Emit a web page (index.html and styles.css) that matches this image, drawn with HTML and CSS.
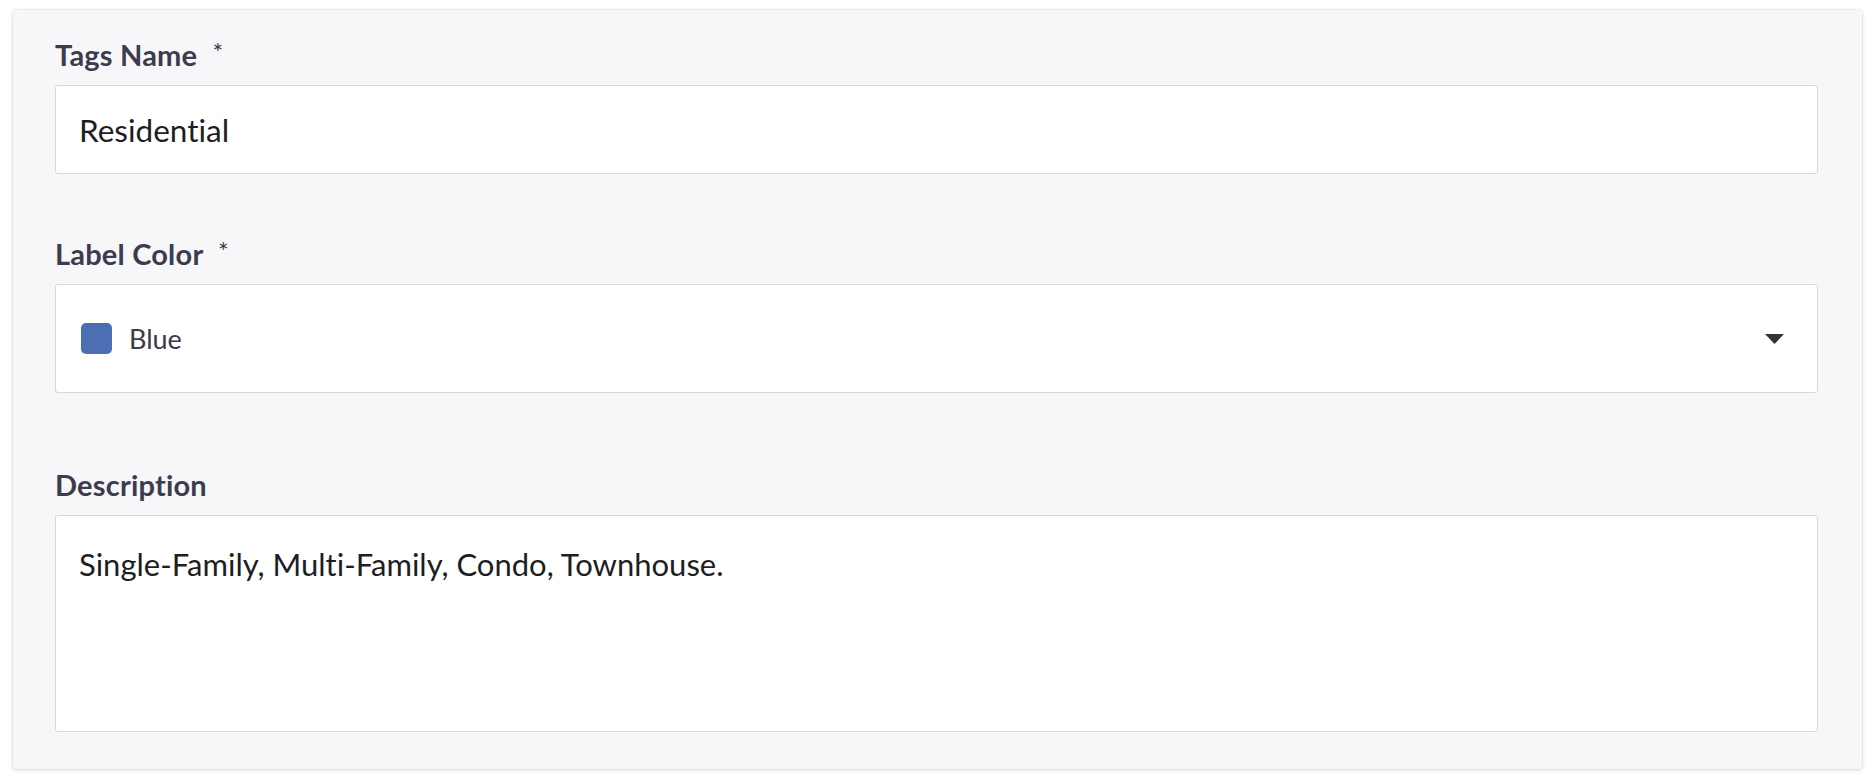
FILE: index.html
```html
<!DOCTYPE html>
<html lang="en">
<head>
<meta charset="utf-8">
<title>Tag form</title>
<link rel="stylesheet" href="styles.css">
</head>
<body>
<form class="card">
  <div class="field field--first">
    <label class="label">Tags Name <span class="req">*</span></label>
    <div class="input">Residential</div>
  </div>
  <div class="field field--second">
    <label class="label">Label Color <span class="req">*</span></label>
    <div class="select">
      <span class="swatch"></span>
      <span class="select-text">Blue</span>
      <svg class="caret" width="19" height="10" viewBox="0 0 19 10"><path d="M0 0 H19 L9.5 10 Z" fill="#333"/></svg>
    </div>
  </div>
  <div class="field">
    <label class="label">Description</label>
    <div class="textarea">Single-Family, Multi-Family, Condo, Townhouse.</div>
  </div>
</form>
</body>
</html>
```
FILE: styles.css
```css
html, body {
  margin: 0;
  padding: 0;
  background: #ffffff;
}
body {
  font-family: "Lato", "Liberation Sans", sans-serif;
  font-variant-ligatures: none;
  padding: 10px 12px 8px 13px;
}
.card {
  display: flex;
  flex-direction: column;
  background: #f7f7f9;
  border-radius: 3px;
  box-shadow: 0 0 0 1px rgba(0,0,0,0.04), 0 1px 5px rgba(0,0,0,0.14);
  padding: 27px 44px 37px 42px;
}
.field {
  display: flex;
  flex-direction: column;
}
.field--first { margin-bottom: 62px; }
.field--second { margin-bottom: 74px; }
.label {
  font-family: "Lato", sans-serif;
  font-weight: 700;
  font-size: 29px;
  line-height: 36px;
  color: #3c3c4e;
  margin-bottom: 12px;
  letter-spacing: 0.2px;
}
.req {
  font-weight: 400;
  font-size: 25px;
  margin-left: 8px;
  vertical-align: top;
  position: relative;
  top: -3px;
}
.input, .select, .textarea {
  background: #ffffff;
  border: 1px solid #d8d8dc;
  border-radius: 3px;
  box-sizing: border-box;
  color: #1e1e22;
  font-size: 31px;
}
.input {
  height: 89px;
  display: flex;
  align-items: center;
  padding: 0 23px;
  font-size: 31.5px;
}
.select {
  height: 109px;
  display: flex;
  align-items: center;
  padding: 0 33px 0 25px;
}
.swatch {
  width: 31px;
  height: 31px;
  border-radius: 5px;
  background: #4c6fb3;
  flex: none;
}
.select-text {
  margin-left: 17px;
  font-size: 27px;
  color: #3a3a48;
  flex: 1;
}
.caret { flex: none; }
.textarea {
  height: 217px;
  padding: 29px 23px;
  line-height: 38px;
}
```
